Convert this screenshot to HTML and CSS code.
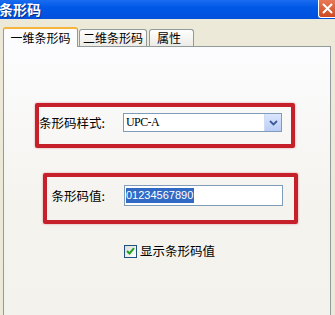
FILE: index.html
```html
<!DOCTYPE html>
<html>
<head>
<meta charset="utf-8">
<link rel="stylesheet" href="styles.css">
</head>
<body>
<div class="window">
  <div class="titlebar">
    <span class="title">条形码</span>
    <span class="close"><svg width="11" height="11" viewBox="0 0 11 11"><path d="M1.5 1.5 L9.5 9.5 M9.5 1.5 L1.5 9.5" stroke="#fff" stroke-width="2" stroke-linecap="round"/></svg></span>
  </div>
  <div class="tabbar">
    <div class="tab active">一维条形码</div>
    <div class="tab tab2">二维条形码</div>
    <div class="tab tab3">属性</div>
  </div>
  <div class="panel">
    <div class="mark mark1">
      <span class="label label1">条形码样式:</span>
      <div class="select">
        <span class="select-text">UPC-A</span>
        <span class="drop"><svg width="9" height="6" viewBox="0 0 9 6"><path d="M1 1 L4.5 4.5 L8 1" fill="none" stroke="#3c5a9a" stroke-width="1.8"/></svg></span>
      </div>
    </div>
    <div class="mark mark2">
      <span class="label label2">条形码值:</span>
      <div class="input"><span class="sel">01234567890</span></div>
    </div>
    <div class="check-row">
      <span class="checkbox"><svg width="9" height="8" viewBox="0 0 9 8"><path d="M1 4 L3.5 6.5 L8 1.2" fill="none" stroke="#21a121" stroke-width="2"/></svg></span>
      <span class="check-label">显示条形码值</span>
    </div>
  </div>
</div>
</body>
</html>
```
FILE: styles.css
```css
html, body {
  margin: 0;
  padding: 0;
}
body {
  width: 335px;
  height: 315px;
  overflow: hidden;
  font-family: "Noto Sans CJK SC", "Liberation Sans", sans-serif;
  background: #ece9d8;
}
.window {
  display: flex;
  flex-direction: column;
  height: 315px;
}
.titlebar {
  height: 19px;
  flex: none;
  display: flex;
  justify-content: space-between;
  align-items: flex-start;
  background: linear-gradient(#1a6cf0, #0058e6 40%, #0150dc);
}
.title {
  color: #fff;
  font-weight: bold;
  font-size: 14px;
  line-height: 18px;
  margin-left: -1px;
  text-shadow: 1px 1px 0 #0a2f8a;
}
.close {
  width: 16px;
  height: 17px;
  background: linear-gradient(#e87a55, #cc4a22);
  border: 1px solid #fff;
  border-top: none;
  border-right: none;
  border-radius: 0 0 0 3px;
  display: flex;
  align-items: center;
  justify-content: center;
}
.tabbar {
  flex: none;
  display: flex;
  align-items: flex-end;
  height: 27px;
  padding-left: 3px;
  background: #ece9d8;
}
.tab {
  box-sizing: border-box;
  height: 17px;
  margin-left: 1px;
  font-size: 12px;
  line-height: 16px;
  text-align: center;
  white-space: nowrap;
  color: #000;
  border: 1px solid #919b9c;
  border-bottom: none;
  border-radius: 3px 3px 0 0;
  background: linear-gradient(#fefefe, #ecebe6);
}
.tab.active {
  width: 75px;
  height: 20px;
  margin-left: 0;
  margin-bottom: -1px;
  line-height: 18px;
  background: #fcfcfe;
  border-top: 2px solid #f5b43c;
  position: relative;
  z-index: 1;
}
.tab2 { width: 68px; }
.tab3 { width: 45px; margin-left: 2px; text-align: left; padding-left: 7px; }
.panel {
  flex: 1;
  margin: 0 4px 0 3px;
  border: 1px solid #919b9c;
  border-bottom: none;
  background: linear-gradient(#fcfcfe, #f4f3ee 60%, #f3f2ed);
  display: flex;
  flex-direction: column;
  align-items: flex-start;
}
.mark {
  box-sizing: border-box;
  border: 4px solid #c6212b;
  border-radius: 2px;
  display: flex;
  align-items: flex-start;
  box-shadow: 0 0 2px rgba(200, 30, 40, 0.5);
}
.mark1 {
  margin: 56px 0 0 31px;
  width: 260px;
  height: 45px;
  padding-top: 6px;
}
.mark2 {
  margin: 25px 0 0 39px;
  width: 255px;
  height: 51px;
  padding-top: 8px;
}
.label {
  font-size: 12.5px;
  color: #000;
  text-align: right;
}
.label1 {
  width: 67px;
  margin-left: -1px;
  line-height: 19px;
}
.label2 {
  width: 58px;
  line-height: 21px;
}
.select {
  box-sizing: border-box;
  margin-left: 18px;
  width: 159px;
  height: 19px;
  border: 1px solid #7f9db9;
  background: #fff;
  display: flex;
  align-items: center;
  justify-content: space-between;
}
.select-text {
  font-family: "Liberation Serif", serif;
  font-size: 12px;
  letter-spacing: -0.6px;
  padding-left: 2px;
  color: #000;
}
.drop {
  width: 16px;
  height: 17px;
  background: linear-gradient(#dbe6fc, #b9cdf6);
  border-left: 1px solid #d0dcf5;
  display: flex;
  align-items: center;
  justify-content: center;
}
.input {
  box-sizing: border-box;
  margin-left: 19px;
  width: 159px;
  height: 21px;
  border: 1px solid #7f9db9;
  background: #fff;
  display: flex;
  align-items: center;
  padding-left: 1px;
}
.sel {
  background: #316ac5;
  color: #fff;
  font-family: "Liberation Sans", sans-serif;
  font-size: 11px;
  line-height: 15px;
  padding-right: 1px;
}
.check-row {
  margin: 20px 0 0 120px;
  display: flex;
  align-items: center;
}
.checkbox {
  box-sizing: border-box;
  width: 13px;
  height: 13px;
  border: 1px solid #1c5180;
  background: linear-gradient(135deg, #dcdcd7, #fff);
  display: flex;
  align-items: center;
  justify-content: center;
}
.check-label {
  margin-left: 3px;
  font-size: 12.5px;
  line-height: 14px;
  color: #000;
}
```
